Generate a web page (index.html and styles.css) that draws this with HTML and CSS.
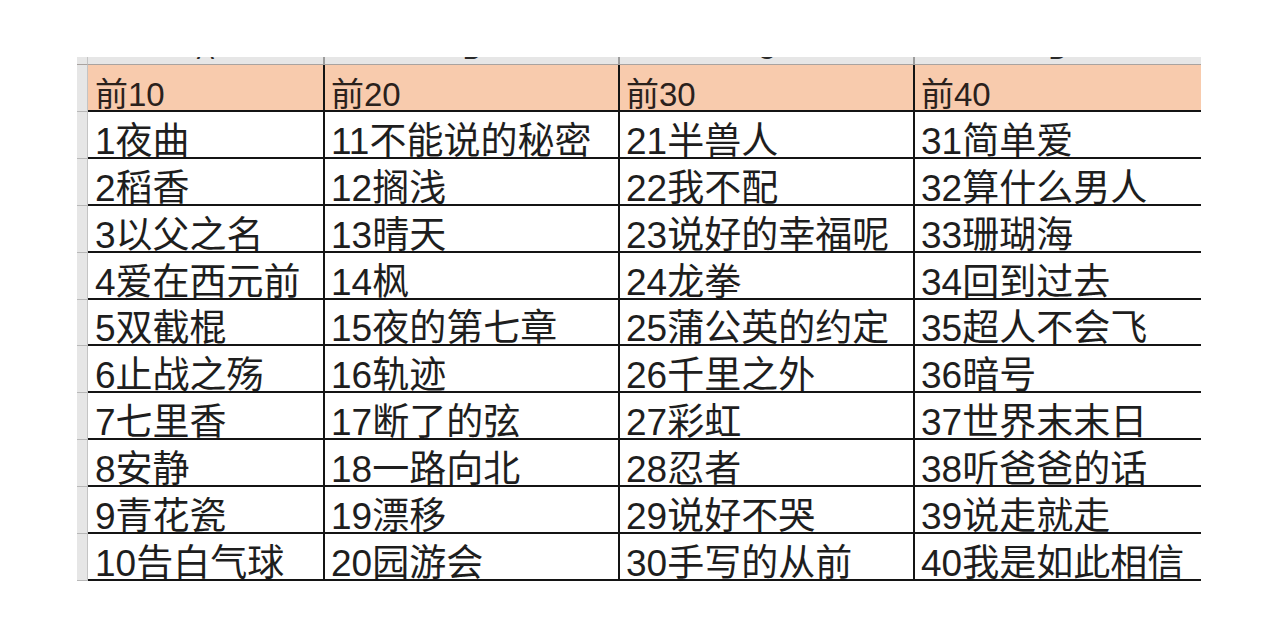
FILE: index.html
```html
<!DOCTYPE html>
<html lang="zh-CN">
<head>
<meta charset="utf-8">
<title>周杰伦歌曲排行</title>
<link rel="stylesheet" href="styles.css">
</head>
<body>
<div class="sheet">
  <div class="corner"></div>
  <div class="colhead"><div class="letter">A</div></div>
  <div class="colhead sep"><div class="letter">B</div></div>
  <div class="colhead sep"><div class="letter">C</div></div>
  <div class="colhead sep"><div class="letter">D</div></div>

  <div class="rowhead"></div>
  <div class="cell head">前10</div>
  <div class="cell head line">前20</div>
  <div class="cell head line">前30</div>
  <div class="cell head line">前40</div>

  <div class="rowhead"></div>
  <div class="cell">1夜曲</div>
  <div class="cell line">11不能说的秘密</div>
  <div class="cell line">21半兽人</div>
  <div class="cell line">31简单爱</div>

  <div class="rowhead"></div>
  <div class="cell">2稻香</div>
  <div class="cell line">12搁浅</div>
  <div class="cell line">22我不配</div>
  <div class="cell line">32算什么男人</div>

  <div class="rowhead"></div>
  <div class="cell">3以父之名</div>
  <div class="cell line">13晴天</div>
  <div class="cell line">23说好的幸福呢</div>
  <div class="cell line">33珊瑚海</div>

  <div class="rowhead"></div>
  <div class="cell">4爱在西元前</div>
  <div class="cell line">14枫</div>
  <div class="cell line">24龙拳</div>
  <div class="cell line">34回到过去</div>

  <div class="rowhead"></div>
  <div class="cell">5双截棍</div>
  <div class="cell line">15夜的第七章</div>
  <div class="cell line">25蒲公英的约定</div>
  <div class="cell line">35超人不会飞</div>

  <div class="rowhead"></div>
  <div class="cell">6止战之殇</div>
  <div class="cell line">16轨迹</div>
  <div class="cell line">26千里之外</div>
  <div class="cell line">36暗号</div>

  <div class="rowhead"></div>
  <div class="cell">7七里香</div>
  <div class="cell line">17断了的弦</div>
  <div class="cell line">27彩虹</div>
  <div class="cell line">37世界末末日</div>

  <div class="rowhead"></div>
  <div class="cell">8安静</div>
  <div class="cell line">18一路向北</div>
  <div class="cell line">28忍者</div>
  <div class="cell line">38听爸爸的话</div>

  <div class="rowhead"></div>
  <div class="cell">9青花瓷</div>
  <div class="cell line">19漂移</div>
  <div class="cell line">29说好不哭</div>
  <div class="cell line">39说走就走</div>

  <div class="rowhead"></div>
  <div class="cell">10告白气球</div>
  <div class="cell line">20园游会</div>
  <div class="cell line">30手写的从前</div>
  <div class="cell line">40我是如此相信</div>
</div>
</body>
</html>
```

FILE: styles.css
```css
html, body {
  margin: 0;
  padding: 0;
  background: #ffffff;
}

body {
  font-family: "Liberation Sans", "Noto Sans CJK SC", sans-serif;
  color: #1e1e1e;
}

.sheet {
  margin: 57px 0 0 77px;
  width: 1124px;
  display: grid;
  grid-template-columns: 11px 235px 295px 295px 288px;
  grid-template-rows: 8px 47px repeat(10, 46.9px);
}

.corner,
.colhead {
  background: #e6e6e6;
  border-bottom: 1px solid #a9a3a0;
  box-sizing: border-box;
  overflow: hidden;
}

.corner {
  border-right: 1px solid #c4c4c4;
}

.colhead.sep {
  border-left: 2px solid #9c9c9c;
}

.letter {
  font-family: "Liberation Sans", Arial, sans-serif;
  font-size: 26px;
  line-height: 26px;
  margin-top: -20px;
  text-align: center;
  color: #2a2a2a;
}

.rowhead {
  background: #e6e6e6;
  border-right: 1px solid #c4c4c4;
  border-bottom: 1px solid #b8b8b8;
  box-sizing: border-box;
}

.cell {
  box-sizing: border-box;
  border-bottom: 2px solid #141414;
  display: flex;
  align-items: flex-end;
  padding: 0 0 0 7px;
  font-size: 37px;
  line-height: 31px;
  white-space: nowrap;
  background: #ffffff;
}

.cell.line {
  border-left: 2px solid #141414;
  padding-left: 6px;
}

.cell.head {
  background: #f8cbad;
  font-size: 33px;
  line-height: 30px;
  color: #2a211c;
}
```
